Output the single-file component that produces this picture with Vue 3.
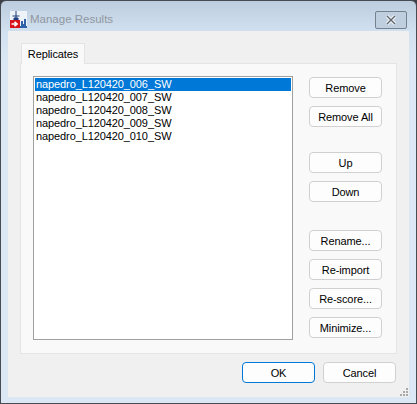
<template>
  <div class="window">
    <div class="titlebar">
      <svg class="app-icon" width="17" height="17" viewBox="0 0 17 17">
        <rect width="17" height="17" fill="#eef3f9" />
        <path d="M6 0v8M2.5 5h7M4 7h4v2H4z" stroke="#1c3f7c" fill="#1c3f7c" stroke-width="1" />
        <rect x="0" y="9" width="10" height="8" fill="#d8141c" />
        <path d="M1.5 13h5M4.5 10.8l2.6 2.2-2.6 2.2" stroke="#fff" stroke-width="1.6" fill="none" />
        <path d="M10 17v-2h1v-5h2v3h1v-5h2v7h1v2z" fill="#2f62a8" />
      </svg>
      <span class="title">Manage Results</span>
      <button class="close">
        <svg width="14" height="10" viewBox="0 0 14 10">
          <path d="M3 1l8 8M11 1l-8 8" stroke="#f4f6f8" stroke-width="3.4" />
          <path d="M3 1l8 8M11 1l-8 8" stroke="#5f6670" stroke-width="1.4" />
        </svg>
      </button>
    </div>

    <div class="client">
      <div class="tabs">
        <div class="tab">Replicates</div>
      </div>
      <div class="panel">
        <ul class="list">
          <li
            v-for="(item, i) in replicates"
            :key="item"
            :class="{ selected: i === 0 }"
          >{{ item }}</li>
        </ul>
        <div class="side">
          <div class="group" v-for="(group, i) in sideButtons" :key="i">
            <button v-for="label in group" :key="label" class="btn">{{ label }}</button>
          </div>
        </div>
      </div>
      <div class="footer">
        <button class="btn default">OK</button>
        <button class="btn">Cancel</button>
      </div>
      <svg class="grip" width="10" height="10" viewBox="0 0 10 10">
        <path d="M7 1h2v2H7zM4 4h2v2H4zM7 4h2v2H7zM1 7h2v2H1zM4 7h2v2H4zM7 7h2v2H7z" fill="#a9a9a9" />
      </svg>
    </div>
  </div>
</template>

<script setup>
const replicates = [
  'napedro_L120420_006_SW',
  'napedro_L120420_007_SW',
  'napedro_L120420_008_SW',
  'napedro_L120420_009_SW',
  'napedro_L120420_010_SW'
]

const sideButtons = [
  ['Remove', 'Remove All'],
  ['Up', 'Down'],
  ['Rename...', 'Re-import', 'Re-score...', 'Minimize...']
]
</script>

<style>
html, body {
  margin: 0;
  background: #3c4046;
}
</style>

<style scoped>
.window {
  box-sizing: border-box;
  width: 417px;
  height: 404px;
  border: 1px solid #474c52;
  border-radius: 6px 6px 0 0;
  background: linear-gradient(#bccddf 0, #d2e1f0 31px, #dbe7f4 60px);
  padding: 0 7px 6px;
  display: flex;
  flex-direction: column;
  font-family: "Liberation Sans", Arial, sans-serif;
  font-size: 11px;
  letter-spacing: -0.1px;
  color: #000;
}

.titlebar {
  height: 30px;
  flex: none;
  display: flex;
  align-items: center;
  gap: 3px;
}

.app-icon {
  margin-left: 2px;
  margin-top: 7px;
  flex: none;
}

.title {
  font-size: 11.5px;
  letter-spacing: 0;
  color: #8f979f;
  flex: 1;
  margin-top: 6px;
}

.close {
  width: 32px;
  height: 18px;
  padding: 0;
  margin-right: 2px;
  margin-top: 8px;
  border: 1px solid #76818e;
  border-radius: 2px;
  background: #bfcfdf;
  display: flex;
  align-items: center;
  justify-content: center;
}

.client {
  flex: 1;
  background: #f0f0f0;
  padding: 12px 12px 12px;
  display: flex;
  flex-direction: column;
  position: relative;
}

.tabs {
  display: flex;
  height: 21px;
  flex: none;
  margin-bottom: -1px;
  position: relative;
  padding-left: 1px;
}

.tab {
  box-sizing: border-box;
  width: 64px;
  height: 21px;
  background: #f9f9f9;
  border: 1px solid #e4e4e4;
  border-bottom: none;
  text-align: center;
  line-height: 20px;
}

.panel {
  box-sizing: border-box;
  height: 291px;
  flex: none;
  background: #f9f9f9;
  border: 1px solid #e4e4e4;
  padding: 12px 14px 12px 12px;
  display: flex;
  justify-content: space-between;
}

.list {
  box-sizing: border-box;
  width: 260px;
  height: 264px;
  margin: 0;
  padding: 1px;
  list-style: none;
  background: #fff;
  border: 1px solid #a0a0a0;
}

.list li {
  height: 13px;
  line-height: 13px;
  padding-left: 1px;
  white-space: nowrap;
}

.list li.selected {
  background: #0078d7;
  color: #fff;
}

.side {
  width: 73px;
  margin-top: 1px;
  display: flex;
  flex-direction: column;
}

.group {
  display: flex;
  flex-direction: column;
  gap: 8px;
  margin-bottom: 25px;
}

.group:nth-child(2) {
  margin-bottom: 28px;
}

.btn {
  box-sizing: border-box;
  width: 73px;
  height: 21px;
  padding: 0;
  background: #fdfdfd;
  border: 1px solid #d0d0d0;
  border-radius: 4px;
  font: inherit;
  letter-spacing: inherit;
  color: #000;
}

.btn.default {
  border-color: #0078d7;
}

.footer {
  display: flex;
  justify-content: flex-end;
  gap: 8px;
  margin-top: 8px;
  padding-right: 1px;
}

.grip {
  position: absolute;
  right: 0;
  bottom: 0;
}
</style>
